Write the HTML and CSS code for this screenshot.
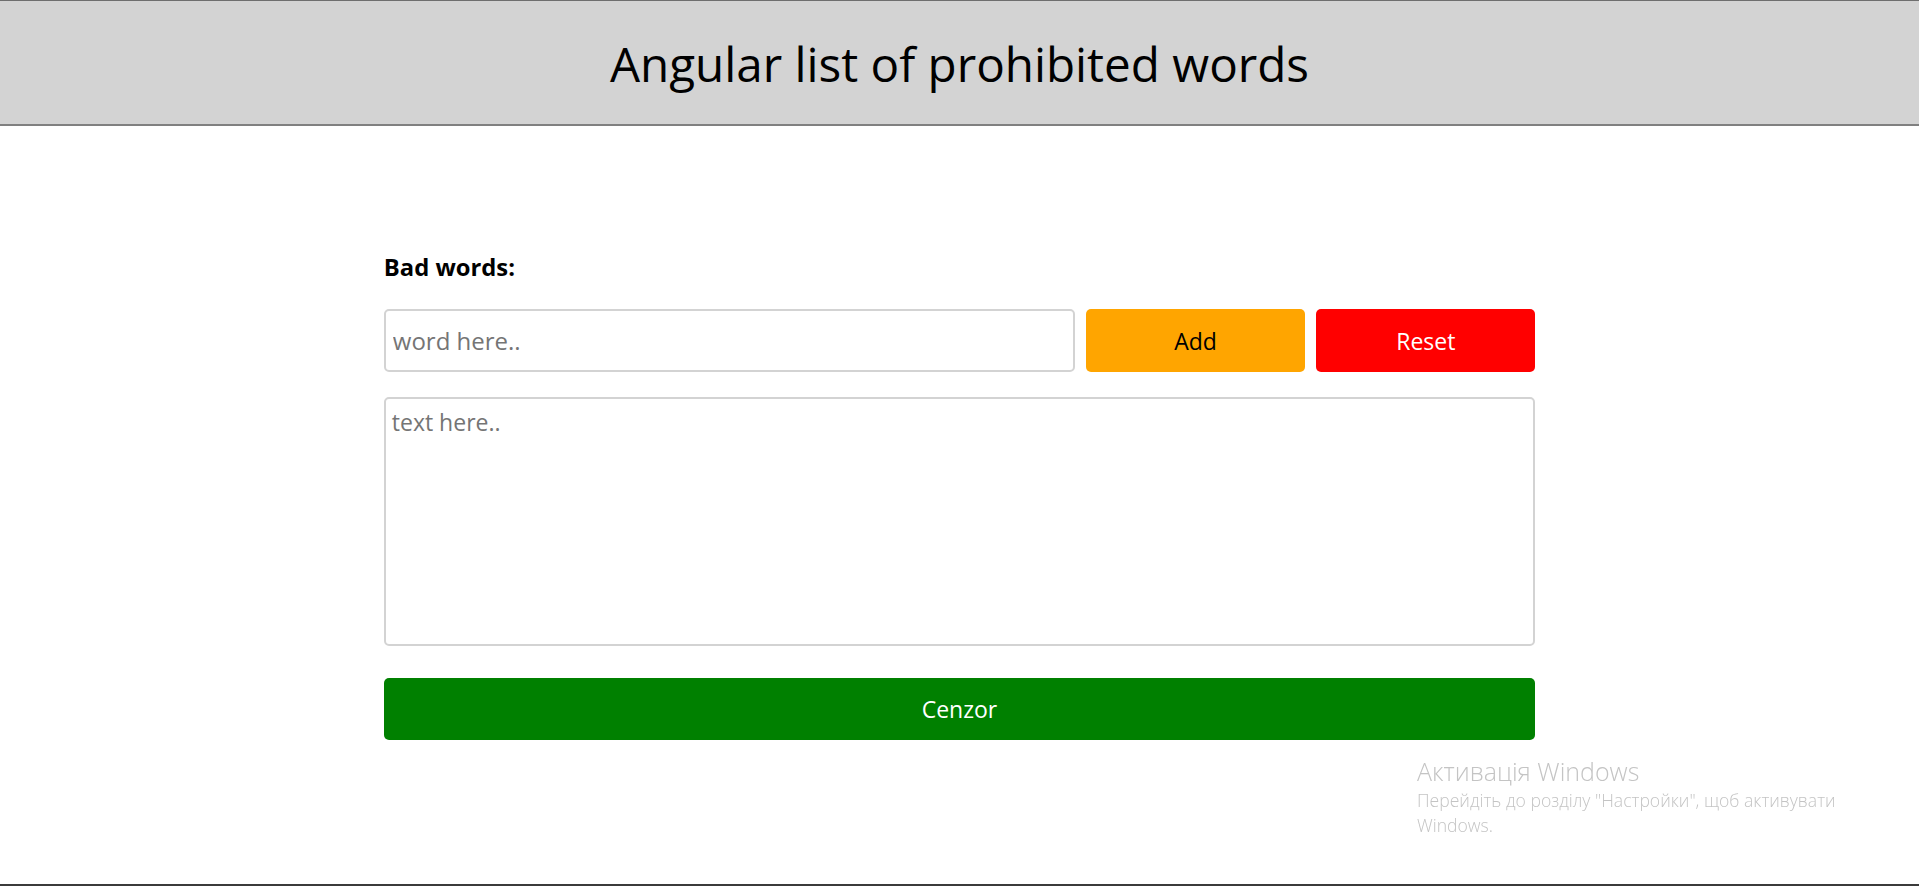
FILE: index.html
```html
<!DOCTYPE html>
<html lang="en">
<head>
<meta charset="utf-8">
<title>Angular list of prohibited words</title>
<link rel="stylesheet" href="styles.css">
</head>
<body>
<header class="header">
  <h1 class="title">Angular list of prohibited words</h1>
</header>
<main class="main">
  <label class="label" for="word">Bad words:</label>
  <div class="row">
    <input class="word-input" id="word" type="text" placeholder="word here..">
    <button class="btn btn-add" type="button">Add</button>
    <button class="btn btn-reset" type="button">Reset</button>
  </div>
  <textarea class="text-area" placeholder="text here.."></textarea>
  <button class="btn btn-cenzor" type="button">Cenzor</button>
</main>
<div class="activation">
  <div class="activation-title">Активація Windows</div>
  <div class="activation-text">Перейдіть до розділу "Настройки", щоб активувати<br>Windows.</div>
</div>
</body>
</html>
```
FILE: styles.css
```css
html, body {
  margin: 0;
  padding: 0;
}

body {
  font-family: "Open Sans", "Noto Sans", "Liberation Sans", sans-serif;
  color: #000;
  background: #fff;
  height: 886px;
  overflow: hidden;
}

body::after {
  content: "";
  position: fixed;
  left: 0;
  right: 0;
  bottom: 0;
  height: 2px;
  background: #3b3b3b;
}

.header {
  box-sizing: border-box;
  height: 126px;
  background: #d3d3d3;
  border-top: 1px solid #6e6e6e;
  border-bottom: 2px solid #808080;
  display: flex;
  align-items: center;
  justify-content: center;
  padding-top: 2px;
}

.title {
  margin: 0;
  font-size: 47.6px;
  font-weight: 400;
  line-height: normal;
}

.main {
  width: 60%;
  margin: 0 auto;
  padding-top: 126px;
  display: flex;
  flex-direction: column;
}

.label {
  font-size: 23.8px;
  font-weight: 700;
  line-height: 31px;
  margin-bottom: 26px;
}

.row {
  display: flex;
  gap: 11.5px;
  height: 63px;
}

.word-input {
  box-sizing: border-box;
  flex: 0 0 60%;
  height: 63px;
  margin: 0;
  border: 2px solid #d3d3d3;
  border-radius: 5px;
  padding: 0 7px;
  font-family: inherit;
  font-size: 24px;
  color: #000;
  outline: none;
}

.word-input::placeholder,
.text-area::placeholder {
  color: #757575;
  opacity: 1;
}

.btn {
  box-sizing: border-box;
  border: none;
  border-radius: 5px;
  margin: 0;
  padding: 0;
  font-family: inherit;
  font-size: 23px;
  cursor: pointer;
}

.btn-add {
  flex: 1 1 0;
  background: #ffa500;
  color: #000;
}

.btn-reset {
  flex: 1 1 0;
  background: #ff0000;
  color: #fff;
}

.text-area {
  box-sizing: border-box;
  display: block;
  width: 100%;
  height: 249px;
  margin: 25px 0 0;
  border: 2px solid #d3d3d3;
  border-radius: 5px;
  padding: 7px 6px;
  font-family: inherit;
  font-size: 23px;
  line-height: normal;
  resize: none;
  outline: none;
}

.btn-cenzor {
  margin-top: 32px;
  height: 62px;
  width: 100%;
  background: #008000;
  color: #fff;
}

.activation {
  position: fixed;
  left: 1417px;
  top: 755px;
  color: #c4c4c4;
  font-weight: 300;
  pointer-events: none;
}

.activation-title {
  font-size: 25px;
  line-height: 33px;
}

.activation-text {
  font-size: 17.6px;
  line-height: 25px;
}
```
